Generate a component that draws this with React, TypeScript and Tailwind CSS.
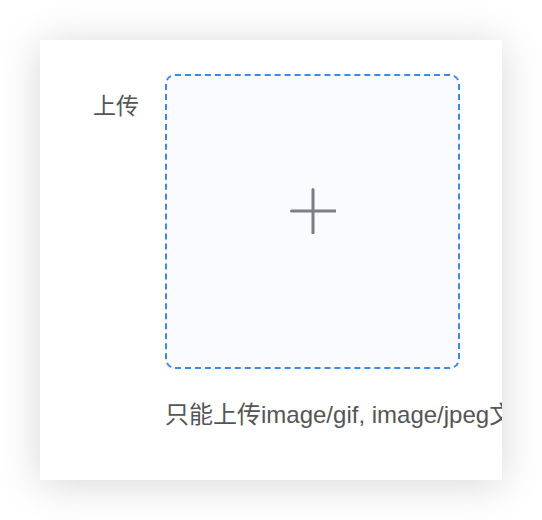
import React from "react";

const font = { fontFamily: '"Liberation Sans", "Noto Sans CJK SC", sans-serif' };

const PlusIcon = () => (
  <svg width="46" height="46" viewBox="0 0 46 46" fill="none">
    <path
      d="M23 1.5v44M1.5 23h44"
      stroke="#7d7f87"
      strokeWidth="3"
      strokeLinecap="round"
    />
  </svg>
);

const App = () => {
  return (
    <div className="w-[542px] h-[520px] bg-white p-10" style={font}>
      <div className="w-[462px] h-[440px] bg-white overflow-hidden shadow-[0_4px_40px_rgba(0,0,0,0.16)]">
        <div className="flex pt-[34px]">
          <div className="w-[125px] shrink-0 pr-[26px] text-right text-[23px] leading-[64px] text-[#555]">
            上传
          </div>
          <div className="flex flex-col">
            <div className="w-[295px] h-[295px] rounded-[10px] border-2 border-dashed border-[#3d8ae5] bg-[#fafbfe] flex items-center justify-center">
              <div className="mb-[22px]">
                <PlusIcon />
              </div>
            </div>
            <p className="mt-[30px] whitespace-nowrap text-[24px] leading-[32px] text-[#555]">
              只能上传image/gif, image/jpeg文件
            </p>
          </div>
        </div>
      </div>
    </div>
  );
};

export default App;
